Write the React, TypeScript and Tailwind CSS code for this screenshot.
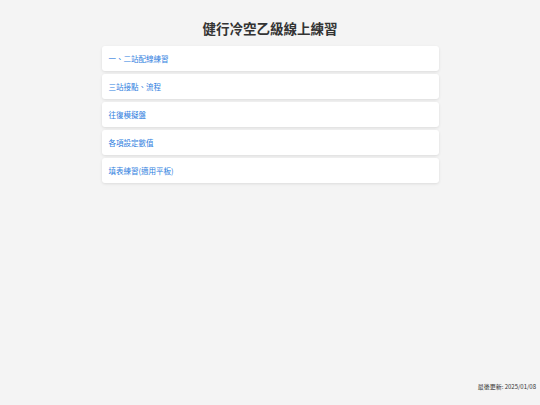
import React from "react";

const items = [
  "一、二站配線練習",
  "三站接點、流程",
  "往復模擬盤",
  "各項設定數值",
  "填表練習(適用平板)",
];

export default function App() {
  return (
    <div
      className="flex h-[405px] w-[540px] flex-col bg-[#f4f4f4]"
      style={{ fontFamily: '"Noto Sans CJK TC", "Noto Sans", sans-serif' }}
    >
      <h1 className="mt-[18px] text-center text-[13.5px] font-bold leading-[20px] text-[#333333]">
        健行冷空乙級線上練習
      </h1>
      <div className="mx-auto mt-[8px] flex w-[337px] flex-col gap-[3px]">
        {items.map((t) => (
          <a
            key={t}
            href="#"
            className="flex h-[25px] items-center rounded-[3px] bg-white px-[7px] text-[7.5px] text-[#2f80e0] shadow-[0_1px_3px_rgba(0,0,0,0.1)]"
          >
            {t}
          </a>
        ))}
      </div>
      <div className="mt-auto mb-[14px] pr-[4px] text-right text-[6px] leading-[8px] text-[#333333]">
        最後更新: 2025/01/08
      </div>
    </div>
  );
}
